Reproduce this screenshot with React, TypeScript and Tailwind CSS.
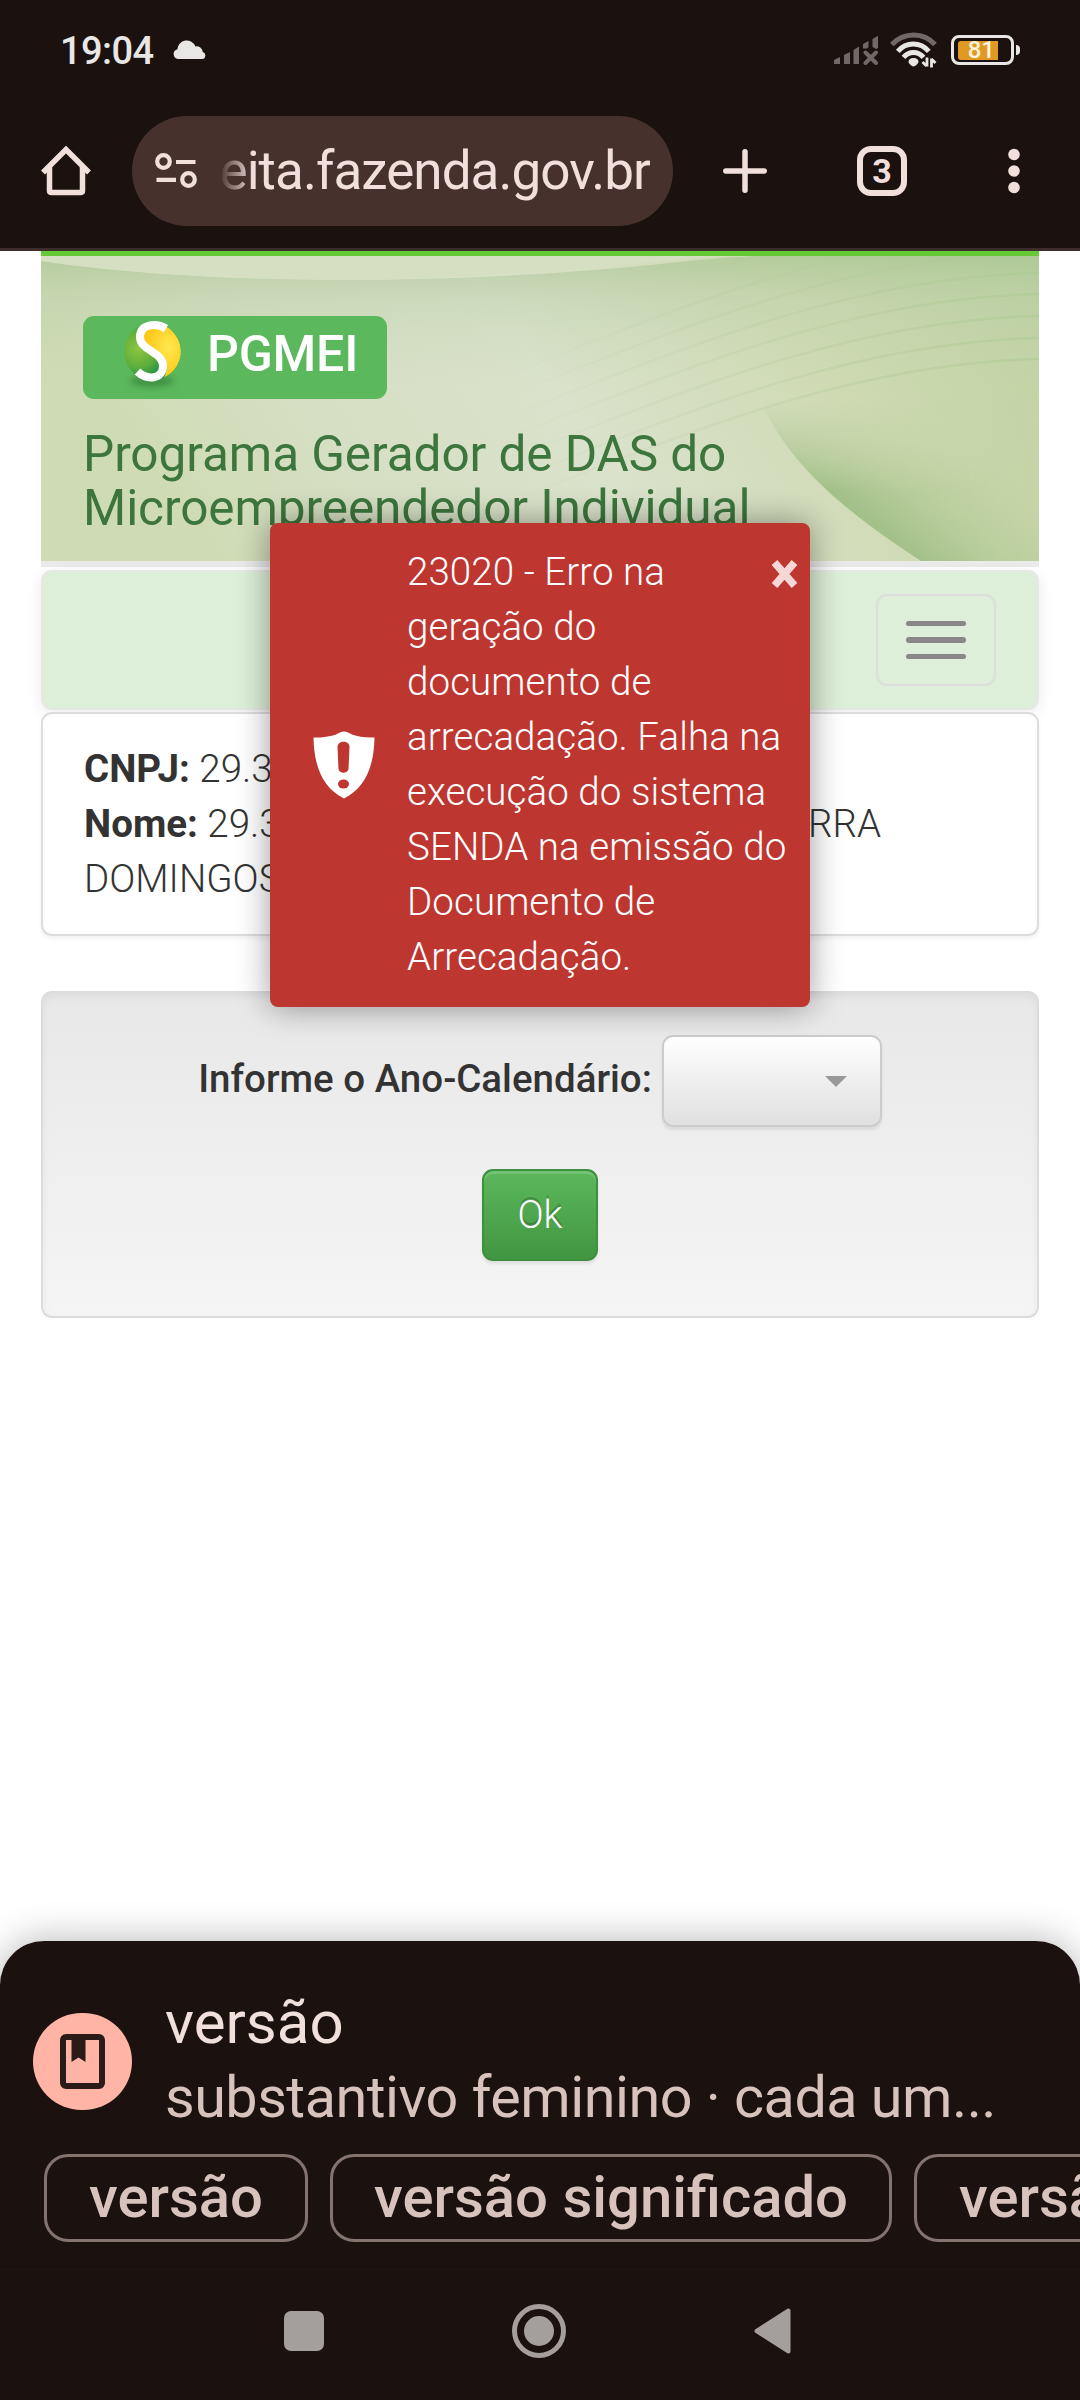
import type { ReactNode } from 'react';

const errorLines = [
  '23020 - Erro na',
  'geração do',
  'documento de',
  'arrecadação. Falha na',
  'execução do sistema',
  'SENDA na emissão do',
  'Documento de',
  'Arrecadação.',
];

const suggestions = [
  { label: 'versão', width: 'w-[264px]' },
  { label: 'versão significado', width: 'w-[562px]' },
  { label: 'versão', width: 'w-[264px]' },
];

function StatusBar() {
  return (
    <div className="flex h-[100px] items-center pl-[60px] pr-[60px] text-[#e8e7e6]">
      <span className="mt-[2px] text-[38px] font-medium leading-none tracking-[-0.6px]">19:04</span>
      <svg className="ml-[20px]" width="34" height="20" viewBox="0 0 34 20" fill="currentColor">
        <path d="M5 19a5 5 0 0 1-.6-9.800A9.300 9.300 0 0 1 22.400 6.500 6.200 6.200 0 0 1 29.800 12 3.700 3.700 0 0 1 30 19z" />
      </svg>
      <svg className="ml-auto" width="44" height="30" viewBox="0 0 44 30" fill="#6f6967">
        <path d="M0 25l6-3v7H0zM10 20l6-3v12h-6zM19.500 15l5.500-3.500V29h-5.500zM29 9l5.500-3V12L33 13.500h-4zM38.500 4L44 0.800V13l-2 1-3.500-2z" />
        <path d="M31.500 17.500l10.500 10.500M42 17.500L31.500 28" stroke="#6f6967" strokeWidth="4" strokeLinecap="round" />
      </svg>
      <svg className="ml-3" width="48" height="36" viewBox="0 0 48 36" fill="none" strokeWidth="5" strokeLinecap="butt">
        <path d="M1.700 12.500C14-.2 33.500-.2 45 12.500" stroke="#6f6967" />
        <path d="M7.800 19.300c8.500-9.800 22.500-9.800 31 0" stroke="currentColor" />
        <path d="M13.500 25.300c5.500-6.500 14.500-6.500 20 0" stroke="currentColor" />
        <path d="M23.500 26c3 0 5 1.500 5 3.800 0 2-3.500 4.700-5 4.700s-5-2.700-5-4.700c0-2.300 2-3.800 5-3.800z" fill="currentColor" />
        <path d="M37 25.500v9M32.500 30l4 4M41.500 35.500V26.500M45.500 31l-4-4" stroke="currentColor" strokeWidth="2.800" />
      </svg>
      <div className="ml-[13px] flex h-[30px] w-[63px] items-center rounded-[8px] border-[3px] border-[#e8e7e6] pl-1">
        <div className="flex h-[19px] w-10 items-center justify-end rounded-l-[3px] bg-[#e09a23] pr-[3px] text-[24px] font-medium leading-none text-[#fff3dc]">
          81
        </div>
      </div>
      <div className="ml-[2px] h-[10px] w-1 rounded-r-[4px] bg-[#e8e7e6]" />
    </div>
  );
}

function Toolbar() {
  return (
    <div className="flex h-[148px] items-center pb-[6px] pl-[41px] text-[#f1dfdb]">
      <svg width="50" height="50" viewBox="0 0 50 50" fill="none" stroke="currentColor" strokeWidth="5.500">
        <path d="M2 26.500L25 3.500l23 23" />
        <path d="M8.500 21v23.500q0 2 2 2h29q2 0 2-2V21" />
      </svg>
      <div className="ml-[41px] flex h-[110px] w-[541px] items-center rounded-full bg-[#47312d] pl-[23px] pr-[23px]">
        <svg width="42" height="36" viewBox="0 0 42 36" fill="none" stroke="currentColor" strokeWidth="4.200">
          <circle cx="8.500" cy="8.500" r="6.300" />
          <path d="M21 9h19.500M1.500 26.800h19.500" />
          <circle cx="33.500" cy="26.500" r="6.300" />
        </svg>
        <div className="ml-[22px] flex flex-1 justify-end overflow-hidden whitespace-nowrap text-[53px] leading-[70px] tracking-[-0.95px] [mask-image:linear-gradient(to_right,transparent,black_34px)]">
          eita.fazenda.gov.br
        </div>
      </div>
      <svg className="ml-[50px]" width="44" height="44" viewBox="0 0 44 44" stroke="currentColor" strokeWidth="5.500" strokeLinecap="round">
        <path d="M22 2.800v38.400M2.800 22h38.400" />
      </svg>
      <div className="ml-[90px] flex h-[50px] w-[50px] items-center justify-center rounded-[14px] border-[6px] border-[#f1dfdb] text-[34px] font-bold leading-none">
        3
      </div>
      <svg className="ml-[101px]" width="12" height="46" viewBox="0 0 12 46" fill="currentColor">
        <circle cx="6" cy="6.500" r="5.800" />
        <circle cx="6" cy="23" r="5.800" />
        <circle cx="6" cy="39.500" r="5.800" />
      </svg>
    </div>
  );
}

// right-hand heights of the thin parallel lines
const arcs = [-25, -4, 17, 38, 60, 82, 103];

function BannerArt() {
  return (
    <svg className="absolute inset-0" width="998" height="305" viewBox="0 0 998 305" preserveAspectRatio="none">
      <defs>
        <linearGradient id="base" x1="0" y1="0.200" x2="1" y2="0">
          <stop offset="0" stopColor="#cfdbb4" />
          <stop offset="0.200" stopColor="#d6dfc3" />
          <stop offset="0.450" stopColor="#dae2cb" />
          <stop offset="0.720" stopColor="#cfdab3" />
          <stop offset="1" stopColor="#bdd1a1" />
        </linearGradient>
        <linearGradient id="shade" x1="0" y1="0" x2="0" y2="1">
          <stop offset="0" stopColor="#a9c592" stopOpacity="0.700" />
          <stop offset="0.350" stopColor="#b7cda6" stopOpacity="0.350" />
          <stop offset="1" stopColor="#c5d6b5" stopOpacity="0" />
        </linearGradient>
        <linearGradient id="line" gradientUnits="userSpaceOnUse" x1="450" y1="0" x2="998" y2="0">
          <stop offset="0" stopColor="#b9cca5" stopOpacity="0" />
          <stop offset="0.500" stopColor="#b4cb9a" stopOpacity="0.300" />
          <stop offset="1" stopColor="#a9c98f" stopOpacity="0.500" />
        </linearGradient>
        <linearGradient id="leaf" gradientUnits="userSpaceOnUse" x1="795" y1="250" x2="880" y2="150">
          <stop offset="0" stopColor="#9fbe86" />
          <stop offset="0.400" stopColor="#b5cb99" />
          <stop offset="1" stopColor="#c2d3a5" stopOpacity="0.600" />
        </linearGradient>
        <linearGradient id="leafFade" gradientUnits="userSpaceOnUse" x1="0" y1="145" x2="0" y2="235">
          <stop offset="0" stopColor="#fff" stopOpacity="0" />
          <stop offset="1" stopColor="#fff" />
        </linearGradient>
        <mask id="leafMask">
          <rect width="998" height="305" fill="url(#leafFade)" />
        </mask>
      </defs>
      <rect width="998" height="305" fill="url(#base)" />
      <path d="M0 5C150 27 380 32 620 8Q680 1 720 0H998V130H0z" fill="url(#shade)" />
      <path d="M0 0v5C150 27 380 32 620 5Q660 1 690 0z" fill="#d6dfc2" />
      {arcs.map((y) => (
        <path
          key={y}
          d={`M450 ${y + 150}C620 ${y + 85} 800 ${y + 4} 998 ${y}`}
          fill="none"
          stroke="url(#line)"
          strokeWidth="2.500"
        />
      ))}
      <path d="M720 145C746 206 800 253 880 305H998V145z" fill="url(#leaf)" mask="url(#leafMask)" />
    </svg>
  );
}

function SimplesLogo() {
  return (
    <svg width="64" height="72" viewBox="0 0 64 72">
      <defs>
        <radialGradient id="green" cx="0.250" cy="0.450" r="0.600">
          <stop offset="0" stopColor="#8dc63f" />
          <stop offset="0.550" stopColor="#5dad3c" />
          <stop offset="1" stopColor="#0b8a4b" />
        </radialGradient>
        <radialGradient id="yellow" cx="0.700" cy="0.450" r="0.600">
          <stop offset="0" stopColor="#ffe94e" />
          <stop offset="1" stopColor="#fbc516" />
        </radialGradient>
        <filter id="soft" x="-30%" y="-80%" width="160%" height="260%">
          <feGaussianBlur stdDeviation="3" />
        </filter>
      </defs>
      <ellipse cx="32" cy="61" rx="22" ry="6" fill="#2f7a35" opacity="0.600" filter="url(#soft)" />
      <circle cx="32.500" cy="31.500" r="28.500" fill="url(#green)" />
      <path d="M20 7Q30 2 40 4A28.500 28.500 0 0 1 44 57.500Q50 46 42 38 22 24 20 7z" fill="url(#yellow)" />
      <path
        d="M46 8.500C36 2.500 20 4 20 17c0 14 23 14.500 23 29C43 59.500 27 60.500 17.500 51.500"
        fill="none"
        stroke="#fff"
        strokeWidth="8"
      />
    </svg>
  );
}

function Banner() {
  return (
    <header className="relative h-[310px] border-t-[5px] border-[#66c936]">
      <BannerArt />
      <div className="relative pl-[42px] pt-[60px]">
        <div className="flex h-[83px] w-[304px] rounded-[11px] bg-[#5cb85c] pl-[37px] pt-[4px]">
          <SimplesLogo />
          <span className="ml-[23px] pt-[7px] text-[50px] font-medium leading-[54px] tracking-[-0.2px] text-white">PGMEI</span>
        </div>
        <h1 className="mt-[28px] text-[49.500px] font-normal leading-[54px] tracking-[-0.08px] text-[#3c763d]">
          Programa Gerador de DAS do
          <br />
          Microempreendedor Individual
        </h1>
      </div>
    </header>
  );
}

function Row({ children }: { children: ReactNode }) {
  return <div className="flex h-[55px] items-center whitespace-pre">{children}</div>;
}

function ErrorToast() {
  return (
    <div className="absolute left-[270px] top-[523px] flex h-[484px] w-[540px] items-center rounded-[8px] bg-[#bd3630] text-white shadow-[0_0_33px_rgba(0,0,0,0.400)]">
      <svg className="ml-[43px]" width="62" height="68" viewBox="0 0 62 68">
        <path d="M31 .5q3 0 8 3 9 3.500 22.500 3C61 36 52 57 31 67.500 10 57 1 36 .5 6.500 14 7 23 3.500 23 3.500q5-3 8-3z" fill="#fff" />
        <path d="M24.500 16c0-7 12-7 12 0l-1 22c-1 5-9 5-10 0z" fill="#bd3630" />
        <ellipse cx="30.500" cy="53" rx="5.500" ry="4.500" fill="#bd3630" />
      </svg>
      <div className="-mt-[2px] ml-[32px] whitespace-nowrap text-[38.500px] font-light leading-[55px] tracking-[0.08px]">
        {errorLines.map((line) => (
          <div key={line}>{line}</div>
        ))}
      </div>
      <svg className="absolute right-[12px] top-[36px]" width="27" height="30" viewBox="0 0 27 30" stroke="#f5d8d6" strokeWidth="7.500">
        <path d="M3.500 3.500l20 23M23.500 3.500l-20 23" />
      </svg>
    </div>
  );
}

function SitePage() {
  return (
    <main className="h-[1690px] bg-white px-[41px] text-[38.500px] font-light text-[#333]">
      <Banner />
      <div className="h-[6px] bg-[#ebebeb]" />
      <nav className="mt-[3px] flex h-[140px] items-center justify-end rounded-[11px] border-2 border-[#e5e8e5] bg-[#ddefd8] pr-[41px] shadow-[0_3px_16px_rgba(0,0,0,0.080)]">
        <button className="flex h-[92px] w-[120px] flex-col items-center justify-center gap-[11px] rounded-[11px] border-2 border-[#ddd]">
          <span className="h-[5.500px] w-[60px] rounded-[3px] bg-[#888]" />
          <span className="h-[5.500px] w-[60px] rounded-[3px] bg-[#888]" />
          <span className="h-[5.500px] w-[60px] rounded-[3px] bg-[#888]" />
        </button>
      </nav>

      <section className="mt-[2px] h-[224px] rounded-[11px] border-2 border-[#ddd] bg-white pl-[41px] pt-[27px] shadow-[0_3px_4px_rgba(0,0,0,0.050)]">
        <Row>
          <b className="font-bold">CNPJ:</b> 29.3
        </Row>
        <Row>
          <b className="font-bold">Nome:</b> 29.3
          <span className="ml-auto mr-[156px]">RRA</span>
        </Row>
        <Row>DOMINGOS</Row>
      </section>

      <section className="mt-[55px] h-[327px] rounded-[11px] border-2 border-[#dcdcdc] bg-linear-to-b from-[#e8e8e8] to-[#f5f5f5] pt-[42px] shadow-[inset_0_3px_8px_rgba(0,0,0,0.050)]">
        <div className="flex items-center justify-center">
          <label className="mr-[10px] mt-[-4px] font-medium">Informe o Ano-Calendário:</label>
          <div className="flex h-[92px] w-[220px] items-center justify-end rounded-[11px] border-2 border-[#ccc] bg-linear-to-b from-white to-[#e0e0e0] pr-[33px] shadow-[0_3px_3px_rgba(0,0,0,0.080)]">
            <span className="border-x-[11px] border-t-[11px] border-x-transparent border-t-[#999]" />
          </div>
        </div>
        <button className="mx-auto mt-[42px] block h-[92px] w-[116px] rounded-[11px] border-2 border-[#3e8f3e] bg-linear-to-b from-[#5cb85c] to-[#419641] pb-[1px] text-white shadow-[inset_0_3px_0_rgba(255,255,255,0.150),0_3px_3px_rgba(0,0,0,0.080)] [text-shadow:0_-3px_0_rgba(0,0,0,0.200)]">
          Ok
        </button>
      </section>
    </main>
  );
}

function DefinitionSheet() {
  return (
    <div className="relative h-[459px] overflow-hidden rounded-t-[44px] bg-[#1b110f]">
      <div className="flex h-[213px] pl-[33px] pt-[71px]">
        <div className="mt-px flex h-[97px] w-[99px] items-center justify-center rounded-full bg-[#ffb4a5]">
          <svg width="45" height="55" viewBox="0 0 45 55" fill="none">
            <rect x="3" y="3" width="39" height="49" rx="3" stroke="#2b1b18" strokeWidth="6" />
            <path d="M11.500 3h14v25l-7-4.500-7 4.500z" fill="#2b1b18" />
          </svg>
        </div>
        <div className="ml-[33px] mt-[-27px] whitespace-nowrap">
          <div className="text-[60px] leading-[75px] text-[#f1dfdb]">versão</div>
          <div className="text-[57.500px] leading-[75px] tracking-[-0.5px] text-[#d8c2bc]">substantivo feminino · cada um...</div>
        </div>
      </div>
      <div className="flex gap-[22px] pl-[44px]">
        {suggestions.map((item, index) => (
          <div
            key={index}
            className={`flex h-[88px] shrink-0 items-center justify-center rounded-[24px] border-[3px] border-[#857370] pb-[2px] text-[58px] font-medium leading-none text-[#d8c2bc] ${item.width}`}
          >
            {item.label}
          </div>
        ))}
      </div>
      <div className="mt-[27px] flex items-center border-t border-[#201513] pl-[284px] pt-[34px]">
        <div className="h-10 w-10 rounded-[7px] bg-[#a49f9d]" />
        <div className="ml-[188px] flex h-[54px] w-[54px] items-center justify-center rounded-full border-[5px] border-[#a49f9d]">
          <div className="h-[30px] w-[30px] rounded-full bg-[#a49f9d]" />
        </div>
        <svg className="ml-[188px]" width="37" height="46" viewBox="0 0 37 46">
          <path d="M2.500 23L34.500 2.500v41z" fill="#a49f9d" stroke="#a49f9d" strokeWidth="4" strokeLinejoin="round" />
        </svg>
      </div>
    </div>
  );
}

export default function App() {
  return (
    <div className="relative h-[2400px] w-[1080px] overflow-hidden bg-white font-['Roboto','Noto_Sans',sans-serif]">
      <div className="h-[251px] border-b-[3px] border-[#3c2c2b] bg-[#1b110f]">
        <StatusBar />
        <Toolbar />
      </div>
      <SitePage />
      <div className="relative rounded-t-[44px] shadow-[0_0_38px_rgba(0,0,0,0.300)]">
        <DefinitionSheet />
      </div>
      <ErrorToast />
    </div>
  );
}
